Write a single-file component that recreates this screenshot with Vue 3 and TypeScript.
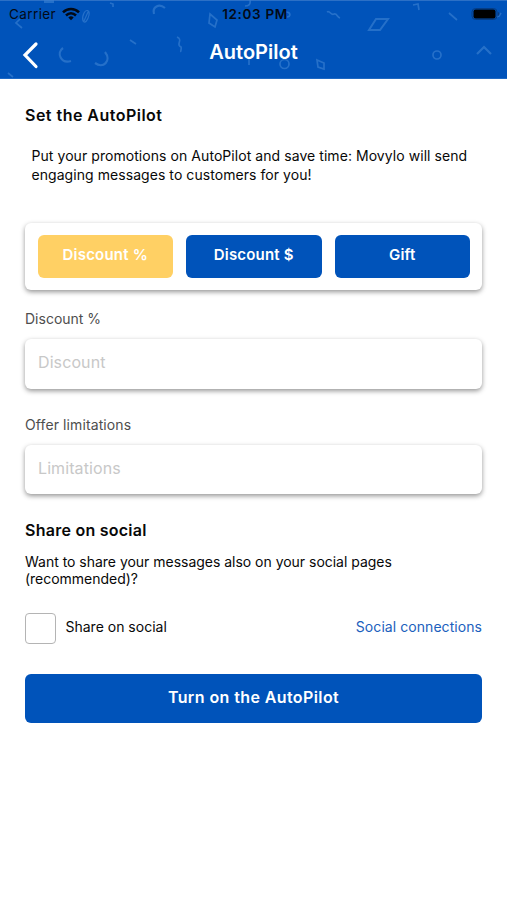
<script setup lang="ts">
import { ref } from 'vue'

type OfferKind = 'percent' | 'dollar' | 'gift'

const offers: { id: OfferKind; label: string }[] = [
  { id: 'percent', label: 'Discount %' },
  { id: 'dollar', label: 'Discount $' },
  { id: 'gift', label: 'Gift' },
]
const selected = ref<OfferKind>('percent')
const discount = ref('')
const limitations = ref('')
const share = ref(false)
</script>

<template>
  <div class="screen">
    <header class="header">
      <svg class="confetti" width="507" height="79" viewBox="0 0 507 79" fill="none" stroke="#3a80d2" stroke-width="1.7">
        <path d="M44 1.500H54" stroke-width="3" />
        <path d="M20 19L16 23L22 28M110 3L113 4V7M130 40L136 44M8 73L13 77" />
        <path d="M84 13C86 9 90 10 89 15C88 20 85 24 83 21C82 18 83 15 84 13ZM88 12L84 21" stroke-width="1.2" />
        <path d="M154 14C152 7 159 3 165 8" stroke-width="2.2" />
        <path d="M63 48C56 53 61 64 71 61" stroke-width="2.2" />
        <path d="M105 52C112 61 103 69 95 63" stroke-width="2.2" />
        <path d="M177 37C184 40 175 44 181 47C182 49 180 51 181 52" />
        <path d="M210 14L217 20L215 27L209 23ZM317 60L324 63L324 69L318 67Z" />
        <path d="M250 0C251 5 248 6 245 6M249 58V65M286 12C291 12 291 17 287 17" />
        <circle cx="284.500" cy="64" r="4.500" />
        <path d="M327 12C330 10 331 16 334 14C337 13 337 17 340 18" />
        <path d="M376 19H388L380 30H369Z" stroke-width="2" />
        <path d="M413 5L418 4L419 10M449 13L457 20" />
        <circle cx="437" cy="55" r="4" />
        <path d="M477 54L484 47L491 54" stroke-width="2.2" />
        <path d="M496 17L499 16L501 13" />
      </svg>
      <div class="status">
        <div class="carrier">
          <span>Carrier</span>
          <svg width="18" height="14" viewBox="0 0 18 14" fill="none" stroke="#030a16" stroke-width="2.500">
            <path d="M1 5.300C5.500 .8 12.500 .8 17 5.300" />
            <path d="M4 8.500C7 5.600 11 5.600 14 8.500" />
            <path d="M6.300 10.400Q9 8.200 11.700 10.400L9 13.200Z" fill="#030a16" stroke="none" />
          </svg>
        </div>
        <span class="clock">12:03 PM</span>
        <svg class="battery" width="30" height="14" viewBox="0 0 30 14">
          <rect x="1" y="1.500" width="25" height="11" rx="3.500" fill="none" stroke="#063c83" />
          <rect x="2.500" y="2.600" width="22" height="8.800" rx="2" fill="#000" />
          <path d="M27 5V9Q28.500 8.500 28.500 7Q28.500 5.500 27 5Z" fill="#063c83" />
        </svg>
      </div>
      <div class="navbar">
        <button class="back" aria-label="Back">
          <svg width="18" height="28" viewBox="0 0 18 28" fill="none" stroke="#fff" stroke-width="3.200" stroke-linecap="round">
            <path d="M15 3L4 14L15 25.500" />
          </svg>
        </button>
        <h1>AutoPilot</h1>
      </div>
    </header>

    <main class="content">
      <h2>Set the AutoPilot</h2>
      <p class="intro">Put your promotions on AutoPilot and save time: Movylo will send<br />engaging messages to customers for you!</p>

      <div class="offers">
        <button
          v-for="offer in offers"
          :key="offer.id"
          class="offer"
          :class="{ active: selected === offer.id }"
          @click="selected = offer.id"
        >{{ offer.label }}</button>
      </div>

      <label class="field">
        <span class="label">Discount %</span>
        <input v-model="discount" placeholder="Discount" />
      </label>
      <label class="field second">
        <span class="label">Offer limitations</span>
        <input v-model="limitations" placeholder="Limitations" />
      </label>

      <h2 class="share-title">Share on social</h2>
      <p class="share-text">Want to share your messages also on your social pages<br />(recommended)?</p>

      <div class="share-row">
        <label class="check">
          <input v-model="share" type="checkbox" />
          <span>Share on social</span>
        </label>
        <a class="link">Social connections</a>
      </div>

      <button class="submit">Turn on the AutoPilot</button>
    </main>
  </div>
</template>

<style>
body {
  background: #fff;
}
</style>

<style scoped>
.screen {
  height: 900px;
  overflow: hidden;
  background: #fff;
  color: #080808;
  font-family: Inter, "Liberation Sans", sans-serif;
}
button,
input {
  font-family: inherit;
  border: 0;
  margin: 0;
  padding: 0;
  box-sizing: border-box;
}
h1,
h2,
p {
  margin: 0;
}
.header {
  position: relative;
  box-sizing: border-box;
  height: 79px;
  background: #0053ba;
  border-top: 1px solid #2c70c6;
  border-bottom: 1px solid #1d68c4;
}
.confetti {
  position: absolute;
  left: 0;
  top: -1px;
  opacity: 0.65;
}
.status {
  position: relative;
  display: grid;
  grid-template-columns: 1fr auto 1fr;
  align-items: center;
  height: 25px;
  padding: 0 6px 0 9px;
  color: #030a16;
  font-size: 13px;
}
.carrier {
  display: flex;
  align-items: center;
  gap: 6px;
  font-size: 13.5px;
  letter-spacing: 0.4px;
}
.clock {
  font-size: 13.5px;
  font-weight: 600;
  letter-spacing: 0.65px;
}
.battery {
  justify-self: end;
}
.navbar {
  position: relative;
  display: grid;
  grid-template-columns: 60px 1fr 60px;
  height: 52px;
}
.back {
  display: flex;
  align-items: center;
  height: 57px;
  padding-left: 21px;
  background: none;
}
h1 {
  color: #fff;
  font-size: 20px;
  line-height: 53px;
  font-weight: 600;
  text-align: center;
}
.content {
  padding: 26px 25px 0;
}
h2 {
  font-size: 16px;
  line-height: 20px;
  font-weight: 600;
  letter-spacing: 0.48px;
}
.intro {
  padding: 21px 0 0 6.5px;
  font-size: 14px;
  line-height: 19px;
  letter-spacing: 0.06px;
  white-space: nowrap;
}
.offers {
  display: grid;
  grid-template-columns: repeat(3, 1fr);
  gap: 13px;
  box-sizing: border-box;
  height: 67px;
  margin-top: 39px;
  padding: 12px 12px 12px 12.5px;
  border-radius: 6px;
  box-shadow: 0 2px 5px rgba(0, 0, 0, 0.42);
}
.offer {
  height: 42.5px;
  padding-bottom: 4px;
  border-radius: 6px;
  background: #0053ba;
  color: #fff;
  font-size: 15px;
  font-weight: 600;
  letter-spacing: 0.2px;
}
.offer.active {
  background: #ffd064;
}
.field {
  display: block;
  margin-top: 19px;
}
.field.second {
  margin-top: 26px;
}
.label {
  display: block;
  color: #4e4e4e;
  font-size: 14px;
  line-height: 20px;
}
.second .label {
  letter-spacing: 0.1px;
}
.field input {
  display: block;
  width: 100%;
  height: 49.5px;
  margin-top: 10px;
  padding: 0 13px 3px;
  border-radius: 6px;
  background: #fff;
  box-shadow: 0 2px 5px rgba(0, 0, 0, 0.42);
  font-size: 16px;
  letter-spacing: 0.1px;
}
.field input::placeholder {
  color: #c8c8c8;
}
.share-title {
  margin-top: 26px;
  letter-spacing: 0.25px;
}
.share-text {
  margin-top: 13px;
  font-size: 14px;
  line-height: 17px;
  letter-spacing: -0.02px;
}
.share-row {
  display: flex;
  align-items: center;
  justify-content: space-between;
  height: 31px;
  margin-top: 26px;
  font-size: 14px;
}
.check {
  display: flex;
  align-items: center;
  gap: 9.5px;
}
.check span {
  padding-bottom: 4px;
}
.check input {
  appearance: none;
  width: 31px;
  height: 31px;
  border: 1.5px solid #b4b4b4;
  border-radius: 4px;
  background: #fff;
}
.link {
  padding-bottom: 5px;
  color: #1b60bd;
  letter-spacing: 0.06px;
}
.submit {
  display: block;
  width: 100%;
  height: 49px;
  margin-top: 30px;
  padding-bottom: 3px;
  border-radius: 6px;
  background: #0053ba;
  color: #fff;
  font-size: 16px;
  font-weight: 600;
  letter-spacing: 0.4px;
}
</style>
